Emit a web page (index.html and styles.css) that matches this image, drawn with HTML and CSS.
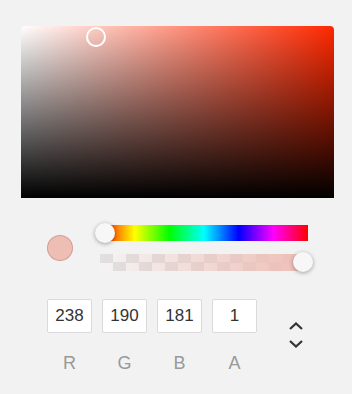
FILE: index.html
```html
<!DOCTYPE html>
<html>
<head>
<meta charset="utf-8">
<link rel="stylesheet" href="styles.css">
</head>
<body>
<div class="picker">
  <div class="sv">
    <div class="sv-marker"></div>
  </div>
  <div class="controls">
    <div class="swatch"></div>
    <div class="sliders">
      <div class="hue">
        <div class="thumb hue-thumb"></div>
      </div>
      <div class="alpha">
        <div class="alpha-fill"></div>
        <div class="thumb alpha-thumb"></div>
      </div>
    </div>
  </div>
  <div class="fields">
    <div class="field"><div class="box">238</div><div class="label">R</div></div>
    <div class="field"><div class="box">190</div><div class="label">G</div></div>
    <div class="field"><div class="box">181</div><div class="label">B</div></div>
    <div class="field"><div class="box">1</div><div class="label">A</div></div>
    <div class="toggle">
      <svg width="16" height="28" viewBox="0 0 16 28">
        <path d="M2 8 L8 2.5 L14 8" fill="none" stroke="#333" stroke-width="2.2"/>
        <path d="M2 20 L8 25.5 L14 20" fill="none" stroke="#333" stroke-width="2.2"/>
      </svg>
    </div>
  </div>
</div>
</body>
</html>
```

FILE: styles.css
```css
html, body {
  margin: 0;
  padding: 0;
  background: #f2f2f2;
  font-family: "Liberation Sans", Arial, sans-serif;
}

.picker {
  width: 352px;
  height: 394px;
  padding: 26px 0 0 21px;
  box-sizing: border-box;
}

.sv {
  position: relative;
  width: 313px;
  height: 172px;
  border-radius: 4px 4px 0 0;
  background:
    linear-gradient(to top, #000, rgba(0,0,0,0)),
    linear-gradient(to right, #fff, rgba(255,255,255,0)),
    rgb(255, 40, 0);
}

.sv-marker {
  position: absolute;
  left: 65px;
  top: 1px;
  width: 16px;
  height: 16px;
  border: 2px solid #fff;
  border-radius: 50%;
}

.controls {
  display: flex;
  align-items: center;
  margin: 27px 0 0 26px;
}

.swatch {
  width: 24px;
  height: 24px;
  border-radius: 50%;
  background: rgb(238, 190, 181);
  border: 1px solid rgba(160, 100, 90, 0.35);
}

.sliders {
  margin-left: 27px;
  width: 208px;
  display: flex;
  flex-direction: column;
  gap: 13px;
}

.hue {
  position: relative;
  height: 16px;
  background: linear-gradient(to right, #f00, #ff0, #0f0, #0ff, #00f, #f0f, #f00);
}

.alpha {
  position: relative;
  height: 17px;
  background-color: #f4f4f4;
  background-image: conic-gradient(transparent 25%, #e0e0e0 0 50%, transparent 0 75%, #e0e0e0 0);
  background-size: 26px 17px;
}

.alpha-fill {
  position: absolute;
  inset: 0;
  background: linear-gradient(to right, rgba(238,190,181,0), rgb(238,190,181));
}

.thumb {
  position: absolute;
  width: 20px;
  height: 20px;
  border-radius: 50%;
  background: #f7f7f7;
  box-shadow: 0 1px 4px rgba(0,0,0,0.35);
}

.hue-thumb {
  left: -5px;
  top: -2px;
}

.alpha-thumb {
  left: 193px;
  top: -2px;
}

.fields {
  display: flex;
  align-items: flex-start;
  margin: 28px 0 0 26px;
}

.field {
  display: flex;
  flex-direction: column;
  align-items: center;
  width: 45px;
  margin-right: 10px;
}

.box {
  width: 45px;
  height: 34px;
  box-sizing: border-box;
  border: 1px solid #dadada;
  border-radius: 2px;
  background: #fff;
  color: #333;
  font-size: 17px;
  line-height: 32px;
  text-align: center;
}

.label {
  margin-top: 20px;
  font-size: 18px;
  line-height: 21px;
  color: #999;
}

.toggle {
  margin: 22px 0 0 21px;
  width: 16px;
  height: 28px;
}

.toggle svg {
  display: block;
}
```
